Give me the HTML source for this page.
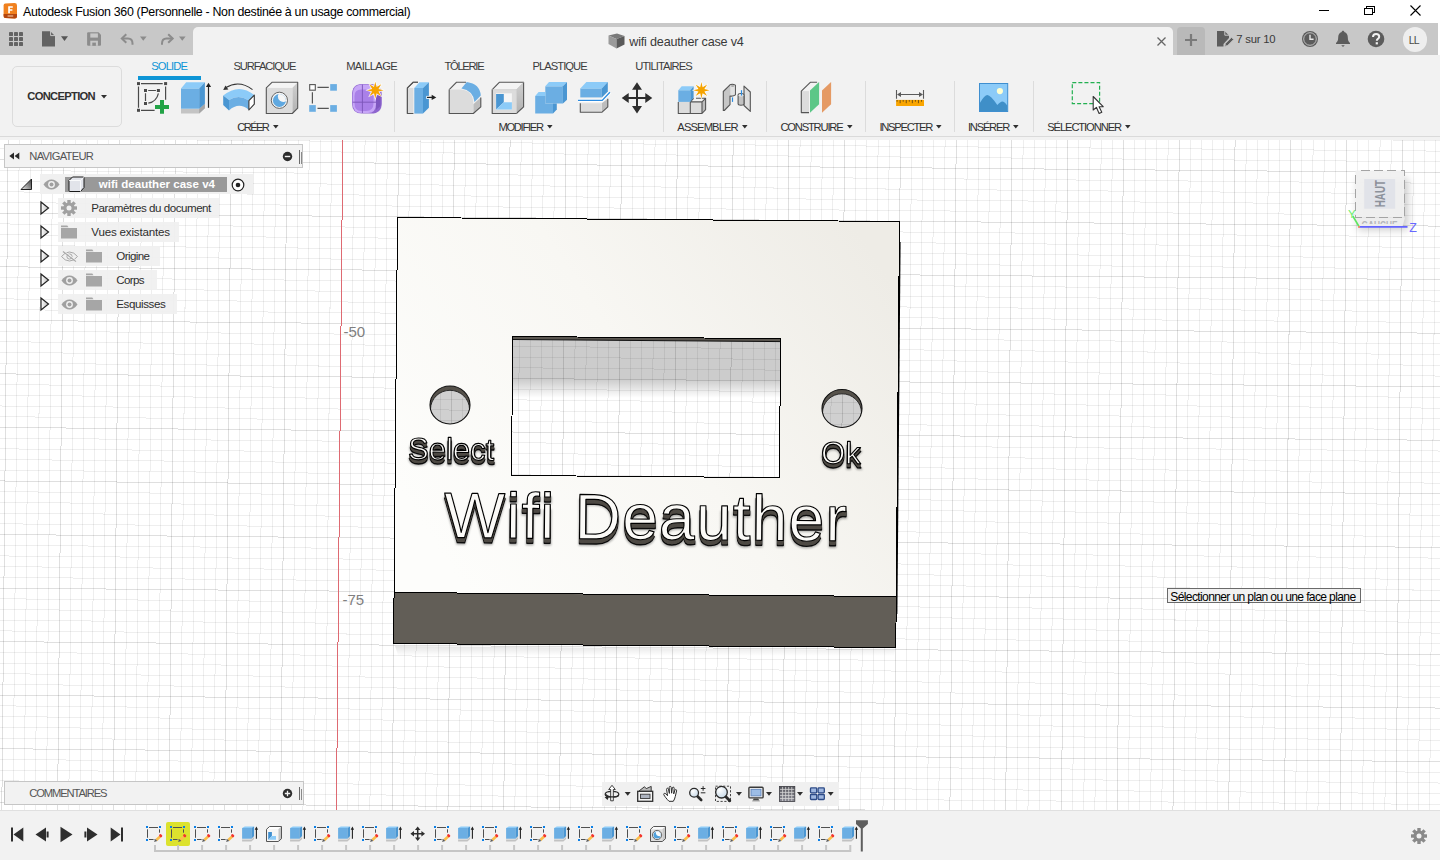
<!DOCTYPE html>
<html lang="fr"><head><meta charset="utf-8"><title>Autodesk Fusion 360</title>
<style>
html,body{margin:0;padding:0;}
body{width:1440px;height:860px;overflow:hidden;position:relative;background:#fff;font-family:"Liberation Sans",sans-serif;}
.t{position:absolute;white-space:nowrap;}
.abs{position:absolute;}
svg{position:absolute;overflow:visible;}

</style></head><body>
<svg style="left:0;top:0" width="1440" height="860" viewBox="0 0 1440 860">
<rect x="0" y="140" width="1440" height="670" fill="#fff"/>
<g shape-rendering="crispEdges" stroke-width="1"><line x1="-3.01" y1="140" x2="-9.35" y2="810" stroke="rgba(0,0,0,0.065)"/>
<line x1="8.15" y1="140" x2="1.81" y2="810" stroke="rgba(0,0,0,0.125)"/>
<line x1="19.30" y1="140" x2="12.96" y2="810" stroke="rgba(0,0,0,0.065)"/>
<line x1="30.45" y1="140" x2="24.12" y2="810" stroke="rgba(0,0,0,0.065)"/>
<line x1="41.61" y1="140" x2="35.27" y2="810" stroke="rgba(0,0,0,0.065)"/>
<line x1="52.76" y1="140" x2="46.42" y2="810" stroke="rgba(0,0,0,0.065)"/>
<line x1="63.92" y1="140" x2="57.58" y2="810" stroke="rgba(0,0,0,0.125)"/>
<line x1="75.07" y1="140" x2="68.73" y2="810" stroke="rgba(0,0,0,0.065)"/>
<line x1="86.22" y1="140" x2="79.89" y2="810" stroke="rgba(0,0,0,0.065)"/>
<line x1="97.38" y1="140" x2="91.04" y2="810" stroke="rgba(0,0,0,0.065)"/>
<line x1="108.53" y1="140" x2="102.19" y2="810" stroke="rgba(0,0,0,0.065)"/>
<line x1="119.69" y1="140" x2="113.35" y2="810" stroke="rgba(0,0,0,0.125)"/>
<line x1="130.84" y1="140" x2="124.50" y2="810" stroke="rgba(0,0,0,0.065)"/>
<line x1="141.99" y1="140" x2="135.66" y2="810" stroke="rgba(0,0,0,0.065)"/>
<line x1="153.15" y1="140" x2="146.81" y2="810" stroke="rgba(0,0,0,0.065)"/>
<line x1="164.30" y1="140" x2="157.96" y2="810" stroke="rgba(0,0,0,0.065)"/>
<line x1="175.46" y1="140" x2="169.12" y2="810" stroke="rgba(0,0,0,0.125)"/>
<line x1="186.61" y1="140" x2="180.27" y2="810" stroke="rgba(0,0,0,0.065)"/>
<line x1="197.76" y1="140" x2="191.43" y2="810" stroke="rgba(0,0,0,0.065)"/>
<line x1="208.92" y1="140" x2="202.58" y2="810" stroke="rgba(0,0,0,0.065)"/>
<line x1="220.07" y1="140" x2="213.73" y2="810" stroke="rgba(0,0,0,0.065)"/>
<line x1="231.23" y1="140" x2="224.89" y2="810" stroke="rgba(0,0,0,0.125)"/>
<line x1="242.38" y1="140" x2="236.04" y2="810" stroke="rgba(0,0,0,0.065)"/>
<line x1="253.53" y1="140" x2="247.20" y2="810" stroke="rgba(0,0,0,0.065)"/>
<line x1="264.69" y1="140" x2="258.35" y2="810" stroke="rgba(0,0,0,0.065)"/>
<line x1="275.84" y1="140" x2="269.50" y2="810" stroke="rgba(0,0,0,0.065)"/>
<line x1="287.00" y1="140" x2="280.66" y2="810" stroke="rgba(0,0,0,0.125)"/>
<line x1="298.15" y1="140" x2="291.81" y2="810" stroke="rgba(0,0,0,0.065)"/>
<line x1="309.30" y1="140" x2="302.97" y2="810" stroke="rgba(0,0,0,0.065)"/>
<line x1="320.46" y1="140" x2="314.12" y2="810" stroke="rgba(0,0,0,0.065)"/>
<line x1="331.61" y1="140" x2="325.27" y2="810" stroke="rgba(0,0,0,0.065)"/>
<line x1="353.92" y1="140" x2="347.58" y2="810" stroke="rgba(0,0,0,0.065)"/>
<line x1="365.07" y1="140" x2="358.74" y2="810" stroke="rgba(0,0,0,0.065)"/>
<line x1="376.23" y1="140" x2="369.89" y2="810" stroke="rgba(0,0,0,0.065)"/>
<line x1="387.38" y1="140" x2="381.04" y2="810" stroke="rgba(0,0,0,0.065)"/>
<line x1="398.54" y1="140" x2="392.20" y2="810" stroke="rgba(0,0,0,0.125)"/>
<line x1="409.69" y1="140" x2="403.35" y2="810" stroke="rgba(0,0,0,0.065)"/>
<line x1="420.84" y1="140" x2="414.51" y2="810" stroke="rgba(0,0,0,0.065)"/>
<line x1="432.00" y1="140" x2="425.66" y2="810" stroke="rgba(0,0,0,0.065)"/>
<line x1="443.15" y1="140" x2="436.81" y2="810" stroke="rgba(0,0,0,0.065)"/>
<line x1="454.31" y1="140" x2="447.97" y2="810" stroke="rgba(0,0,0,0.125)"/>
<line x1="465.46" y1="140" x2="459.12" y2="810" stroke="rgba(0,0,0,0.065)"/>
<line x1="476.61" y1="140" x2="470.28" y2="810" stroke="rgba(0,0,0,0.065)"/>
<line x1="487.77" y1="140" x2="481.43" y2="810" stroke="rgba(0,0,0,0.065)"/>
<line x1="498.92" y1="140" x2="492.58" y2="810" stroke="rgba(0,0,0,0.065)"/>
<line x1="510.08" y1="140" x2="503.74" y2="810" stroke="rgba(0,0,0,0.125)"/>
<line x1="521.23" y1="140" x2="514.89" y2="810" stroke="rgba(0,0,0,0.065)"/>
<line x1="532.38" y1="140" x2="526.05" y2="810" stroke="rgba(0,0,0,0.065)"/>
<line x1="543.54" y1="140" x2="537.20" y2="810" stroke="rgba(0,0,0,0.065)"/>
<line x1="554.69" y1="140" x2="548.35" y2="810" stroke="rgba(0,0,0,0.065)"/>
<line x1="565.85" y1="140" x2="559.51" y2="810" stroke="rgba(0,0,0,0.125)"/>
<line x1="577.00" y1="140" x2="570.66" y2="810" stroke="rgba(0,0,0,0.065)"/>
<line x1="588.15" y1="140" x2="581.82" y2="810" stroke="rgba(0,0,0,0.065)"/>
<line x1="599.31" y1="140" x2="592.97" y2="810" stroke="rgba(0,0,0,0.065)"/>
<line x1="610.46" y1="140" x2="604.12" y2="810" stroke="rgba(0,0,0,0.065)"/>
<line x1="621.62" y1="140" x2="615.28" y2="810" stroke="rgba(0,0,0,0.125)"/>
<line x1="632.77" y1="140" x2="626.43" y2="810" stroke="rgba(0,0,0,0.065)"/>
<line x1="643.92" y1="140" x2="637.59" y2="810" stroke="rgba(0,0,0,0.065)"/>
<line x1="655.08" y1="140" x2="648.74" y2="810" stroke="rgba(0,0,0,0.065)"/>
<line x1="666.23" y1="140" x2="659.89" y2="810" stroke="rgba(0,0,0,0.065)"/>
<line x1="677.39" y1="140" x2="671.05" y2="810" stroke="rgba(0,0,0,0.125)"/>
<line x1="688.54" y1="140" x2="682.20" y2="810" stroke="rgba(0,0,0,0.065)"/>
<line x1="699.69" y1="140" x2="693.36" y2="810" stroke="rgba(0,0,0,0.065)"/>
<line x1="710.85" y1="140" x2="704.51" y2="810" stroke="rgba(0,0,0,0.065)"/>
<line x1="722.00" y1="140" x2="715.66" y2="810" stroke="rgba(0,0,0,0.065)"/>
<line x1="733.16" y1="140" x2="726.82" y2="810" stroke="rgba(0,0,0,0.125)"/>
<line x1="744.31" y1="140" x2="737.97" y2="810" stroke="rgba(0,0,0,0.065)"/>
<line x1="755.46" y1="140" x2="749.13" y2="810" stroke="rgba(0,0,0,0.065)"/>
<line x1="766.62" y1="140" x2="760.28" y2="810" stroke="rgba(0,0,0,0.065)"/>
<line x1="777.77" y1="140" x2="771.43" y2="810" stroke="rgba(0,0,0,0.065)"/>
<line x1="788.93" y1="140" x2="782.59" y2="810" stroke="rgba(0,0,0,0.125)"/>
<line x1="800.08" y1="140" x2="793.74" y2="810" stroke="rgba(0,0,0,0.065)"/>
<line x1="811.23" y1="140" x2="804.90" y2="810" stroke="rgba(0,0,0,0.065)"/>
<line x1="822.39" y1="140" x2="816.05" y2="810" stroke="rgba(0,0,0,0.065)"/>
<line x1="833.54" y1="140" x2="827.20" y2="810" stroke="rgba(0,0,0,0.065)"/>
<line x1="844.70" y1="140" x2="838.36" y2="810" stroke="rgba(0,0,0,0.125)"/>
<line x1="855.85" y1="140" x2="849.51" y2="810" stroke="rgba(0,0,0,0.065)"/>
<line x1="867.00" y1="140" x2="860.67" y2="810" stroke="rgba(0,0,0,0.065)"/>
<line x1="878.16" y1="140" x2="871.82" y2="810" stroke="rgba(0,0,0,0.065)"/>
<line x1="889.31" y1="140" x2="882.97" y2="810" stroke="rgba(0,0,0,0.065)"/>
<line x1="900.47" y1="140" x2="894.13" y2="810" stroke="rgba(0,0,0,0.125)"/>
<line x1="911.62" y1="140" x2="905.28" y2="810" stroke="rgba(0,0,0,0.065)"/>
<line x1="922.77" y1="140" x2="916.44" y2="810" stroke="rgba(0,0,0,0.065)"/>
<line x1="933.93" y1="140" x2="927.59" y2="810" stroke="rgba(0,0,0,0.065)"/>
<line x1="945.08" y1="140" x2="938.74" y2="810" stroke="rgba(0,0,0,0.065)"/>
<line x1="956.24" y1="140" x2="949.90" y2="810" stroke="rgba(0,0,0,0.125)"/>
<line x1="967.39" y1="140" x2="961.05" y2="810" stroke="rgba(0,0,0,0.065)"/>
<line x1="978.54" y1="140" x2="972.21" y2="810" stroke="rgba(0,0,0,0.065)"/>
<line x1="989.70" y1="140" x2="983.36" y2="810" stroke="rgba(0,0,0,0.065)"/>
<line x1="1000.85" y1="140" x2="994.51" y2="810" stroke="rgba(0,0,0,0.065)"/>
<line x1="1012.01" y1="140" x2="1005.67" y2="810" stroke="rgba(0,0,0,0.125)"/>
<line x1="1023.16" y1="140" x2="1016.82" y2="810" stroke="rgba(0,0,0,0.065)"/>
<line x1="1034.31" y1="140" x2="1027.98" y2="810" stroke="rgba(0,0,0,0.065)"/>
<line x1="1045.47" y1="140" x2="1039.13" y2="810" stroke="rgba(0,0,0,0.065)"/>
<line x1="1056.62" y1="140" x2="1050.28" y2="810" stroke="rgba(0,0,0,0.065)"/>
<line x1="1067.78" y1="140" x2="1061.44" y2="810" stroke="rgba(0,0,0,0.125)"/>
<line x1="1078.93" y1="140" x2="1072.59" y2="810" stroke="rgba(0,0,0,0.065)"/>
<line x1="1090.08" y1="140" x2="1083.75" y2="810" stroke="rgba(0,0,0,0.065)"/>
<line x1="1101.24" y1="140" x2="1094.90" y2="810" stroke="rgba(0,0,0,0.065)"/>
<line x1="1112.39" y1="140" x2="1106.05" y2="810" stroke="rgba(0,0,0,0.065)"/>
<line x1="1123.55" y1="140" x2="1117.21" y2="810" stroke="rgba(0,0,0,0.125)"/>
<line x1="1134.70" y1="140" x2="1128.36" y2="810" stroke="rgba(0,0,0,0.065)"/>
<line x1="1145.85" y1="140" x2="1139.52" y2="810" stroke="rgba(0,0,0,0.065)"/>
<line x1="1157.01" y1="140" x2="1150.67" y2="810" stroke="rgba(0,0,0,0.065)"/>
<line x1="1168.16" y1="140" x2="1161.82" y2="810" stroke="rgba(0,0,0,0.065)"/>
<line x1="1179.32" y1="140" x2="1172.98" y2="810" stroke="rgba(0,0,0,0.125)"/>
<line x1="1190.47" y1="140" x2="1184.13" y2="810" stroke="rgba(0,0,0,0.065)"/>
<line x1="1201.62" y1="140" x2="1195.29" y2="810" stroke="rgba(0,0,0,0.065)"/>
<line x1="1212.78" y1="140" x2="1206.44" y2="810" stroke="rgba(0,0,0,0.065)"/>
<line x1="1223.93" y1="140" x2="1217.59" y2="810" stroke="rgba(0,0,0,0.065)"/>
<line x1="1235.09" y1="140" x2="1228.75" y2="810" stroke="rgba(0,0,0,0.125)"/>
<line x1="1246.24" y1="140" x2="1239.90" y2="810" stroke="rgba(0,0,0,0.065)"/>
<line x1="1257.39" y1="140" x2="1251.06" y2="810" stroke="rgba(0,0,0,0.065)"/>
<line x1="1268.55" y1="140" x2="1262.21" y2="810" stroke="rgba(0,0,0,0.065)"/>
<line x1="1279.70" y1="140" x2="1273.36" y2="810" stroke="rgba(0,0,0,0.065)"/>
<line x1="1290.86" y1="140" x2="1284.52" y2="810" stroke="rgba(0,0,0,0.125)"/>
<line x1="1302.01" y1="140" x2="1295.67" y2="810" stroke="rgba(0,0,0,0.065)"/>
<line x1="1313.16" y1="140" x2="1306.83" y2="810" stroke="rgba(0,0,0,0.065)"/>
<line x1="1324.32" y1="140" x2="1317.98" y2="810" stroke="rgba(0,0,0,0.065)"/>
<line x1="1335.47" y1="140" x2="1329.13" y2="810" stroke="rgba(0,0,0,0.065)"/>
<line x1="1346.63" y1="140" x2="1340.29" y2="810" stroke="rgba(0,0,0,0.125)"/>
<line x1="1357.78" y1="140" x2="1351.44" y2="810" stroke="rgba(0,0,0,0.065)"/>
<line x1="1368.93" y1="140" x2="1362.60" y2="810" stroke="rgba(0,0,0,0.065)"/>
<line x1="1380.09" y1="140" x2="1373.75" y2="810" stroke="rgba(0,0,0,0.065)"/>
<line x1="1391.24" y1="140" x2="1384.90" y2="810" stroke="rgba(0,0,0,0.065)"/>
<line x1="1402.40" y1="140" x2="1396.06" y2="810" stroke="rgba(0,0,0,0.125)"/>
<line x1="1413.55" y1="140" x2="1407.21" y2="810" stroke="rgba(0,0,0,0.065)"/>
<line x1="1424.70" y1="140" x2="1418.37" y2="810" stroke="rgba(0,0,0,0.065)"/>
<line x1="1435.86" y1="140" x2="1429.52" y2="810" stroke="rgba(0,0,0,0.065)"/>
<line x1="1447.01" y1="140" x2="1440.67" y2="810" stroke="rgba(0,0,0,0.065)"/>
<line x1="0" y1="127.53" x2="1440" y2="140.43" stroke="rgba(0,0,0,0.065)"/>
<line x1="0" y1="138.24" x2="1440" y2="151.14" stroke="rgba(0,0,0,0.065)"/>
<line x1="0" y1="148.95" x2="1440" y2="161.85" stroke="rgba(0,0,0,0.065)"/>
<line x1="0" y1="159.66" x2="1440" y2="172.56" stroke="rgba(0,0,0,0.125)"/>
<line x1="0" y1="170.37" x2="1440" y2="183.27" stroke="rgba(0,0,0,0.065)"/>
<line x1="0" y1="181.08" x2="1440" y2="193.98" stroke="rgba(0,0,0,0.065)"/>
<line x1="0" y1="191.79" x2="1440" y2="204.69" stroke="rgba(0,0,0,0.065)"/>
<line x1="0" y1="202.50" x2="1440" y2="215.40" stroke="rgba(0,0,0,0.065)"/>
<line x1="0" y1="213.21" x2="1440" y2="226.11" stroke="rgba(0,0,0,0.125)"/>
<line x1="0" y1="223.92" x2="1440" y2="236.82" stroke="rgba(0,0,0,0.065)"/>
<line x1="0" y1="234.63" x2="1440" y2="247.53" stroke="rgba(0,0,0,0.065)"/>
<line x1="0" y1="245.34" x2="1440" y2="258.24" stroke="rgba(0,0,0,0.065)"/>
<line x1="0" y1="256.05" x2="1440" y2="268.95" stroke="rgba(0,0,0,0.065)"/>
<line x1="0" y1="266.76" x2="1440" y2="279.66" stroke="rgba(0,0,0,0.125)"/>
<line x1="0" y1="277.47" x2="1440" y2="290.37" stroke="rgba(0,0,0,0.065)"/>
<line x1="0" y1="288.18" x2="1440" y2="301.08" stroke="rgba(0,0,0,0.065)"/>
<line x1="0" y1="298.89" x2="1440" y2="311.79" stroke="rgba(0,0,0,0.065)"/>
<line x1="0" y1="309.60" x2="1440" y2="322.50" stroke="rgba(0,0,0,0.065)"/>
<line x1="0" y1="320.31" x2="1440" y2="333.21" stroke="rgba(0,0,0,0.125)"/>
<line x1="0" y1="331.02" x2="1440" y2="343.92" stroke="rgba(0,0,0,0.065)"/>
<line x1="0" y1="341.73" x2="1440" y2="354.63" stroke="rgba(0,0,0,0.065)"/>
<line x1="0" y1="352.44" x2="1440" y2="365.34" stroke="rgba(0,0,0,0.065)"/>
<line x1="0" y1="363.15" x2="1440" y2="376.05" stroke="rgba(0,0,0,0.065)"/>
<line x1="0" y1="373.86" x2="1440" y2="386.76" stroke="rgba(0,0,0,0.125)"/>
<line x1="0" y1="384.57" x2="1440" y2="397.47" stroke="rgba(0,0,0,0.065)"/>
<line x1="0" y1="395.28" x2="1440" y2="408.18" stroke="rgba(0,0,0,0.065)"/>
<line x1="0" y1="405.99" x2="1440" y2="418.89" stroke="rgba(0,0,0,0.065)"/>
<line x1="0" y1="416.70" x2="1440" y2="429.60" stroke="rgba(0,0,0,0.065)"/>
<line x1="0" y1="427.41" x2="1440" y2="440.31" stroke="rgba(0,0,0,0.125)"/>
<line x1="0" y1="438.12" x2="1440" y2="451.02" stroke="rgba(0,0,0,0.065)"/>
<line x1="0" y1="448.83" x2="1440" y2="461.73" stroke="rgba(0,0,0,0.065)"/>
<line x1="0" y1="459.54" x2="1440" y2="472.44" stroke="rgba(0,0,0,0.065)"/>
<line x1="0" y1="470.25" x2="1440" y2="483.15" stroke="rgba(0,0,0,0.065)"/>
<line x1="0" y1="480.96" x2="1440" y2="493.86" stroke="rgba(0,0,0,0.125)"/>
<line x1="0" y1="491.67" x2="1440" y2="504.57" stroke="rgba(0,0,0,0.065)"/>
<line x1="0" y1="502.38" x2="1440" y2="515.28" stroke="rgba(0,0,0,0.065)"/>
<line x1="0" y1="513.09" x2="1440" y2="525.99" stroke="rgba(0,0,0,0.065)"/>
<line x1="0" y1="523.80" x2="1440" y2="536.70" stroke="rgba(0,0,0,0.065)"/>
<line x1="0" y1="534.51" x2="1440" y2="547.41" stroke="rgba(0,0,0,0.125)"/>
<line x1="0" y1="545.22" x2="1440" y2="558.12" stroke="rgba(0,0,0,0.065)"/>
<line x1="0" y1="555.93" x2="1440" y2="568.83" stroke="rgba(0,0,0,0.065)"/>
<line x1="0" y1="566.64" x2="1440" y2="579.54" stroke="rgba(0,0,0,0.065)"/>
<line x1="0" y1="577.35" x2="1440" y2="590.25" stroke="rgba(0,0,0,0.065)"/>
<line x1="0" y1="588.06" x2="1440" y2="600.96" stroke="rgba(0,0,0,0.125)"/>
<line x1="0" y1="598.77" x2="1440" y2="611.67" stroke="rgba(0,0,0,0.065)"/>
<line x1="0" y1="609.48" x2="1440" y2="622.38" stroke="rgba(0,0,0,0.065)"/>
<line x1="0" y1="620.19" x2="1440" y2="633.09" stroke="rgba(0,0,0,0.065)"/>
<line x1="0" y1="630.90" x2="1440" y2="643.80" stroke="rgba(0,0,0,0.065)"/>
<line x1="0" y1="641.61" x2="1440" y2="654.51" stroke="rgba(0,0,0,0.125)"/>
<line x1="0" y1="652.32" x2="1440" y2="665.22" stroke="rgba(0,0,0,0.065)"/>
<line x1="0" y1="663.03" x2="1440" y2="675.93" stroke="rgba(0,0,0,0.065)"/>
<line x1="0" y1="673.74" x2="1440" y2="686.64" stroke="rgba(0,0,0,0.065)"/>
<line x1="0" y1="684.45" x2="1440" y2="697.35" stroke="rgba(0,0,0,0.065)"/>
<line x1="0" y1="695.16" x2="1440" y2="708.06" stroke="rgba(0,0,0,0.125)"/>
<line x1="0" y1="705.87" x2="1440" y2="718.77" stroke="rgba(0,0,0,0.065)"/>
<line x1="0" y1="716.58" x2="1440" y2="729.48" stroke="rgba(0,0,0,0.065)"/>
<line x1="0" y1="727.29" x2="1440" y2="740.19" stroke="rgba(0,0,0,0.065)"/>
<line x1="0" y1="738.00" x2="1440" y2="750.90" stroke="rgba(0,0,0,0.065)"/>
<line x1="0" y1="748.71" x2="1440" y2="761.61" stroke="rgba(0,0,0,0.125)"/>
<line x1="0" y1="759.42" x2="1440" y2="772.32" stroke="rgba(0,0,0,0.065)"/>
<line x1="0" y1="770.13" x2="1440" y2="783.03" stroke="rgba(0,0,0,0.065)"/>
<line x1="0" y1="780.84" x2="1440" y2="793.74" stroke="rgba(0,0,0,0.065)"/>
<line x1="0" y1="791.55" x2="1440" y2="804.45" stroke="rgba(0,0,0,0.065)"/>
<line x1="0" y1="802.26" x2="1440" y2="815.16" stroke="rgba(0,0,0,0.125)"/>
<line x1="342.77" y1="140" x2="336.43" y2="810" stroke="#de6a72"/></g>
<text x="343.500" y="337" font-size="15" fill="#808080" font-family="Liberation Sans, sans-serif">-50</text>
<text x="342.500" y="605" font-size="15" fill="#808080" font-family="Liberation Sans, sans-serif">-75</text>

<defs>
<linearGradient id="topg" x1="0" y1="0.7" x2="1" y2="0.2"><stop offset="0" stop-color="#fdfdfb"/><stop offset="0.5" stop-color="#f8f7f3"/><stop offset="1" stop-color="#eeece6"/></linearGradient>
<linearGradient id="cutg" gradientUnits="userSpaceOnUse" x1="0" y1="340" x2="0" y2="398"><stop offset="0" stop-color="#000" stop-opacity="0.2"/><stop offset="0.68" stop-color="#000" stop-opacity="0.2"/><stop offset="1" stop-color="#000" stop-opacity="0"/></linearGradient>
<linearGradient id="shg" gradientUnits="userSpaceOnUse" x1="0" y1="646" x2="0" y2="656"><stop offset="0" stop-color="#000" stop-opacity="0.1"/><stop offset="1" stop-color="#000" stop-opacity="0"/></linearGradient>
<filter id="blur2" x="-20%" y="-20%" width="140%" height="140%"><feGaussianBlur stdDeviation="2"/></filter>
<filter id="blur1" x="-20%" y="-20%" width="140%" height="140%"><feGaussianBlur stdDeviation="1.2"/></filter>
</defs>
<!-- ground shadow -->
<polygon points="395.00,646.00 895.00,650.00 893.00,662.00 399.00,658.00" fill="url(#shg)"/>
<!-- right side sliver -->
<polygon points="898.50,242.00 900.60,242.00 897.40,614.00 895.30,614.00" fill="#000"/>
<!-- top face with holes (evenodd) -->
<path fill-rule="evenodd" fill="url(#topg)" d="M397.5 217.5 L899.5 221.5 L896.2 596.5 L394.0 592.5 Z M512.7 336.5 L780.6 338.6 L779.4 477.6 L511.5 475.5 Z M430 405 a20 19 0 1 0 40 0 a20 19 0 1 0 -40 0 Z M822 408.5 a20 19 0 1 0 40 0 a20 19 0 1 0 -40 0 Z"/>
<!-- front face -->
<polygon points="394.00,592.50 896.20,596.50 895.80,647.50 393.60,643.50" fill="#625e57"/>
<!-- cutout shadow + wall -->
<polygon points="512.70,336.50 780.60,338.60 780.30,398.00 512.20,398.00" fill="url(#cutg)"/>
<polygon points="512.70,336.50 780.60,338.60 780.60,341.60 512.70,339.50" fill="#5a5650"/>
<polyline points="512.70,339.50 780.60,341.60" fill="none" stroke="#111" stroke-width="1"/>
<!-- holes -->
<g>
<clipPath id="h1"><ellipse cx="450" cy="405" rx="20" ry="19"/></clipPath>
<clipPath id="h2"><ellipse cx="842" cy="408.5" rx="20" ry="19"/></clipPath>
<g clip-path="url(#h1)"><path fill-rule="evenodd" fill="#55514a" d="M429 405 a21 20 0 1 0 42 0 a21 20 0 1 0 -42 0 Z M430.5 409.3 a19.5 19 0 1 0 39.0 0 a19.5 19 0 1 0 -39.0 0 Z"/><ellipse cx="450" cy="409.300" rx="19.500" ry="19" fill="#000" fill-opacity="0.185" stroke="#1c1c1c" stroke-width="0.900"/></g>
<g clip-path="url(#h2)"><path fill-rule="evenodd" fill="#55514a" d="M821 408.5 a21 20 0 1 0 42 0 a21 20 0 1 0 -42 0 Z M822.5 412.8 a19.5 19 0 1 0 39.0 0 a19.5 19 0 1 0 -39.0 0 Z"/><ellipse cx="842" cy="412.800" rx="19.500" ry="19" fill="#000" fill-opacity="0.185" stroke="#1c1c1c" stroke-width="0.900"/></g>
<ellipse cx="450" cy="405" rx="20" ry="19" fill="none" stroke="#111" stroke-width="1.100"/>
<ellipse cx="842" cy="408.500" rx="20" ry="19" fill="none" stroke="#111" stroke-width="1.100"/>
</g>
<!-- outlines -->
<g fill="none" stroke="#000" stroke-width="1" shape-rendering="crispEdges">
<polygon points="397.50,217.50 899.50,221.50 895.80,647.50 393.60,643.50"/>
<line x1="394.0" y1="592.5" x2="896.2" y2="596.5"/>
<polygon points="512.70,336.50 780.60,338.60 779.40,477.60 511.50,475.50"/>
</g>
<g opacity="0.999" transform="translate(408,459.5) rotate(0.5) scale(1,1)">
<text x="0" y="5" font-family="Liberation Sans, sans-serif" font-size="31" letter-spacing="0" fill="#000" opacity="0.35" filter="url(#blur1)" stroke="#000" stroke-width="2">Select</text>
<text x="0" y="4" font-family="Liberation Sans, sans-serif" font-size="31" letter-spacing="0" fill="#4f4b45" stroke="#0c0c0c" stroke-width="1.500" stroke-linejoin="round">Select</text>
<text x="0" y="3" font-family="Liberation Sans, sans-serif" font-size="31" letter-spacing="0" fill="#4f4b45" stroke="#4f4b45" stroke-width="0.300" stroke-linejoin="round">Select</text>
<text x="0" y="2" font-family="Liberation Sans, sans-serif" font-size="31" letter-spacing="0" fill="#4f4b45" stroke="#4f4b45" stroke-width="0.300" stroke-linejoin="round">Select</text>
<text x="0" y="1" font-family="Liberation Sans, sans-serif" font-size="31" letter-spacing="0" fill="#4f4b45" stroke="#4f4b45" stroke-width="0.300" stroke-linejoin="round">Select</text>
<text x="0" y="0" font-family="Liberation Sans, sans-serif" font-size="31" letter-spacing="0" fill="#fbfaf7" stroke="#000" stroke-width="1.150" stroke-linejoin="round">Select</text>
</g><g opacity="0.999" transform="translate(821,463.5) rotate(0.5) scale(1,1)">
<text x="0" y="5" font-family="Liberation Sans, sans-serif" font-size="31" letter-spacing="0.2" fill="#000" opacity="0.35" filter="url(#blur1)" stroke="#000" stroke-width="2">Ok</text>
<text x="0" y="4" font-family="Liberation Sans, sans-serif" font-size="31" letter-spacing="0.2" fill="#4f4b45" stroke="#0c0c0c" stroke-width="1.500" stroke-linejoin="round">Ok</text>
<text x="0" y="3" font-family="Liberation Sans, sans-serif" font-size="31" letter-spacing="0.2" fill="#4f4b45" stroke="#4f4b45" stroke-width="0.300" stroke-linejoin="round">Ok</text>
<text x="0" y="2" font-family="Liberation Sans, sans-serif" font-size="31" letter-spacing="0.2" fill="#4f4b45" stroke="#4f4b45" stroke-width="0.300" stroke-linejoin="round">Ok</text>
<text x="0" y="1" font-family="Liberation Sans, sans-serif" font-size="31" letter-spacing="0.2" fill="#4f4b45" stroke="#4f4b45" stroke-width="0.300" stroke-linejoin="round">Ok</text>
<text x="0" y="0" font-family="Liberation Sans, sans-serif" font-size="31" letter-spacing="0.2" fill="#fbfaf7" stroke="#000" stroke-width="1.150" stroke-linejoin="round">Ok</text>
</g><g opacity="0.999" transform="translate(444,537.5) rotate(0.5) scale(1,1)">
<text x="0" y="6" font-family="Liberation Sans, sans-serif" font-size="64.5" letter-spacing="1.0" fill="#000" opacity="0.35" filter="url(#blur1)" stroke="#000" stroke-width="2">Wifi Deauther</text>
<text x="0" y="5" font-family="Liberation Sans, sans-serif" font-size="64.5" letter-spacing="1.0" fill="#4f4b45" stroke="#0c0c0c" stroke-width="1.500" stroke-linejoin="round">Wifi Deauther</text>
<text x="0" y="4" font-family="Liberation Sans, sans-serif" font-size="64.5" letter-spacing="1.0" fill="#4f4b45" stroke="#4f4b45" stroke-width="0.300" stroke-linejoin="round">Wifi Deauther</text>
<text x="0" y="3" font-family="Liberation Sans, sans-serif" font-size="64.5" letter-spacing="1.0" fill="#4f4b45" stroke="#4f4b45" stroke-width="0.300" stroke-linejoin="round">Wifi Deauther</text>
<text x="0" y="2" font-family="Liberation Sans, sans-serif" font-size="64.5" letter-spacing="1.0" fill="#4f4b45" stroke="#4f4b45" stroke-width="0.300" stroke-linejoin="round">Wifi Deauther</text>
<text x="0" y="1" font-family="Liberation Sans, sans-serif" font-size="64.5" letter-spacing="1.0" fill="#4f4b45" stroke="#4f4b45" stroke-width="0.300" stroke-linejoin="round">Wifi Deauther</text>
<text x="0" y="0" font-family="Liberation Sans, sans-serif" font-size="64.5" letter-spacing="1.0" fill="#fbfaf7" stroke="#000" stroke-width="1.150" stroke-linejoin="round">Wifi Deauther</text>
</g>
</svg>
<div class="abs" style="left:4px;top:144px;width:299px;height:23.500px;background:#f2f2f2;border:1px solid #c6c6c6;box-sizing:border-box"></div>
<svg style="left:9px;top:152px" width="12" height="8" viewBox="0 0 12 8"><path d="M5 0.500v7L0.300 4zM10.300 0.500v7L5.600 4z" fill="#2a2a2a"/></svg>
<div class="t " style="left:29.30px;top:150.18px;font-size:11.2px;line-height:13.44px;color:#555;letter-spacing:-0.719px;">NAVIGATEUR</div>
<svg style="left:282px;top:151px" width="11" height="11" viewBox="0 0 11 11"><circle cx="5.500" cy="5.500" r="4.700" fill="#2c2c2c"/><rect x="2.800" y="4.800" width="5.400" height="1.400" fill="#f2f2f2"/></svg>
<div class="abs" style="left:299px;top:150px;width:1.200px;height:14px;background:#6a6a6a"></div><div class="abs" style="left:301.200px;top:152px;width:1px;height:12px;background:#8a8a8a"></div>
<div class="abs" style="left:40px;top:174px;width:212.500px;height:19.500px;background:#f0f0f0"></div>
<svg style="left:20px;top:178px" width="13" height="13" viewBox="0 0 13 13"><defs><linearGradient id="trg" x1="0" y1="1" x2="1" y2="0.300"><stop offset="0" stop-color="#eee"/><stop offset="1" stop-color="#555"/></linearGradient></defs><path d="M11.500 1v10.500H1z" fill="url(#trg)" stroke="#222" stroke-width="1"/></svg>
<svg style="left:43px;top:178.500px" width="17" height="11" viewBox="0 0 17 11"><g><path d="M0.500 5.500Q4 0.500 8.500 0.500T16.500 5.500Q13 10.500 8.500 10.500T0.500 5.500Z" fill="#a0a0a0"/><circle cx="8.500" cy="5.500" r="3.400" fill="#f0f0f0"/><circle cx="8.500" cy="5.500" r="2" fill="#a0a0a0"/></g></svg>
<div class="abs" style="left:65px;top:176.500px;width:162px;height:15.500px;background:#999"></div>
<svg style="left:67.500px;top:176px" width="17" height="17" viewBox="0 0 17 17"><path d="M1 4.500L4.500 1h10.500q1 0 1 1v9.500L12.500 15.500H2q-1 0-1-1z" fill="#e2e4ea" stroke="#1a1a1a" stroke-width="1" stroke-linejoin="round"/><path d="M1 4.500h11.500v11M12.500 4.500L16 1.300" fill="none" stroke="#fff" stroke-width="0.800"/></svg>
<div class="t " style="left:98.80px;top:178.30px;font-size:11.5px;line-height:13.80px;color:#fff;letter-spacing:0.025px;font-weight:bold;">wifi deauther case v4</div>
<svg style="left:230.500px;top:177.500px" width="14" height="14" viewBox="0 0 14 14"><circle cx="7" cy="7" r="5.800" fill="#fff" stroke="#222" stroke-width="1.200"/><circle cx="7" cy="7" r="2.300" fill="#222"/></svg>
<div class="abs" style="left:58.300px;top:198.2px;width:161.2px;height:19.500px;background:rgba(240,240,240,0.940)"></div>
<svg style="left:39.5px;top:201px" width="10" height="14" viewBox="0 0 10 14"><defs><linearGradient id="tg39.5201" x1="0" y1="0" x2="1" y2="0"><stop offset="0" stop-color="#fff"/><stop offset="1" stop-color="#bbb"/></linearGradient></defs><path d="M1 1l7.500 6-7.500 6z" fill="url(#tg39.5201)" stroke="#222" stroke-width="1.200" stroke-linejoin="miter"/></svg>
<svg style="left:61px;top:200px" width="16" height="16" viewBox="0 0 16 16"><g transform="translate(8,8)" fill="#a0a0a0"><circle r="5.600"/><g><rect x="-1.700" y="-8" width="3.400" height="4" transform="rotate(0)"/><rect x="-1.700" y="-8" width="3.400" height="4" transform="rotate(45)"/><rect x="-1.700" y="-8" width="3.400" height="4" transform="rotate(90)"/><rect x="-1.700" y="-8" width="3.400" height="4" transform="rotate(135)"/><rect x="-1.700" y="-8" width="3.400" height="4" transform="rotate(180)"/><rect x="-1.700" y="-8" width="3.400" height="4" transform="rotate(225)"/><rect x="-1.700" y="-8" width="3.400" height="4" transform="rotate(270)"/><rect x="-1.700" y="-8" width="3.400" height="4" transform="rotate(315)"/></g><circle r="2.500" fill="#f0f0f0"/></g></svg>
<div class="t " style="left:91.30px;top:201.24px;font-size:11.6px;line-height:13.92px;color:#2e2e2e;letter-spacing:-0.485px;">Paramètres du document</div>
<div class="abs" style="left:58.300px;top:222.2px;width:121.2px;height:19.500px;background:rgba(240,240,240,0.940)"></div>
<svg style="left:39.5px;top:225px" width="10" height="14" viewBox="0 0 10 14"><defs><linearGradient id="tg39.5225" x1="0" y1="0" x2="1" y2="0"><stop offset="0" stop-color="#fff"/><stop offset="1" stop-color="#bbb"/></linearGradient></defs><path d="M1 1l7.500 6-7.500 6z" fill="url(#tg39.5225)" stroke="#222" stroke-width="1.200" stroke-linejoin="miter"/></svg>
<svg style="left:61px;top:224.5px" width="16" height="14" viewBox="0 0 16 14"><path d="M0 0.500h6.300l1.200 1.800H0z" fill="#a6a6a6"/><rect x="0" y="3" width="16" height="10.500" fill="#a6a6a6"/></svg>
<div class="t " style="left:91.30px;top:225.24px;font-size:11.6px;line-height:13.92px;color:#2e2e2e;letter-spacing:-0.194px;">Vues existantes</div>
<div class="abs" style="left:58.300px;top:246.2px;width:102.2px;height:19.500px;background:rgba(240,240,240,0.940)"></div>
<svg style="left:39.5px;top:249px" width="10" height="14" viewBox="0 0 10 14"><defs><linearGradient id="tg39.5249" x1="0" y1="0" x2="1" y2="0"><stop offset="0" stop-color="#fff"/><stop offset="1" stop-color="#bbb"/></linearGradient></defs><path d="M1 1l7.500 6-7.500 6z" fill="url(#tg39.5249)" stroke="#222" stroke-width="1.200" stroke-linejoin="miter"/></svg>
<svg style="left:60.500px;top:250.5px" width="17" height="11" viewBox="0 0 17 11"><g fill="none" stroke="#a8a8a8" stroke-width="1"><path d="M0.500 5.500Q4 1 8.500 1T16.500 5.500Q13 10 8.500 10T0.500 5.500Z"/><circle cx="8.500" cy="5.500" r="2.600"/><path d="M2 0.500L15 10.500" stroke-width="1.200"/><path d="M3.500 0.300L16 10" stroke="#f0f0f0" stroke-width="0.800"/></g></svg>
<svg style="left:86px;top:248.5px" width="16" height="14" viewBox="0 0 16 14"><path d="M0 0.500h6.300l1.200 1.800H0z" fill="#a6a6a6"/><rect x="0" y="3" width="16" height="10.500" fill="#a6a6a6"/></svg>
<div class="t " style="left:116.30px;top:249.24px;font-size:11.6px;line-height:13.92px;color:#2e2e2e;letter-spacing:-0.612px;">Origine</div>
<div class="abs" style="left:58.300px;top:270.2px;width:98.5px;height:19.500px;background:rgba(240,240,240,0.940)"></div>
<svg style="left:39.5px;top:273px" width="10" height="14" viewBox="0 0 10 14"><defs><linearGradient id="tg39.5273" x1="0" y1="0" x2="1" y2="0"><stop offset="0" stop-color="#fff"/><stop offset="1" stop-color="#bbb"/></linearGradient></defs><path d="M1 1l7.500 6-7.500 6z" fill="url(#tg39.5273)" stroke="#222" stroke-width="1.200" stroke-linejoin="miter"/></svg>
<svg style="left:60.500px;top:274.5px" width="17" height="11" viewBox="0 0 17 11"><g><path d="M0.500 5.500Q4 0.500 8.500 0.500T16.500 5.500Q13 10.500 8.500 10.500T0.500 5.500Z" fill="#a0a0a0"/><circle cx="8.500" cy="5.500" r="3.400" fill="#f0f0f0"/><circle cx="8.500" cy="5.500" r="2" fill="#a0a0a0"/></g></svg>
<svg style="left:86px;top:272.5px" width="16" height="14" viewBox="0 0 16 14"><path d="M0 0.500h6.300l1.200 1.800H0z" fill="#a6a6a6"/><rect x="0" y="3" width="16" height="10.500" fill="#a6a6a6"/></svg>
<div class="t " style="left:116.30px;top:273.24px;font-size:11.6px;line-height:13.92px;color:#2e2e2e;letter-spacing:-0.682px;">Corps</div>
<div class="abs" style="left:58.300px;top:294.2px;width:118.5px;height:19.500px;background:rgba(240,240,240,0.940)"></div>
<svg style="left:39.5px;top:297px" width="10" height="14" viewBox="0 0 10 14"><defs><linearGradient id="tg39.5297" x1="0" y1="0" x2="1" y2="0"><stop offset="0" stop-color="#fff"/><stop offset="1" stop-color="#bbb"/></linearGradient></defs><path d="M1 1l7.500 6-7.500 6z" fill="url(#tg39.5297)" stroke="#222" stroke-width="1.200" stroke-linejoin="miter"/></svg>
<svg style="left:60.500px;top:298.5px" width="17" height="11" viewBox="0 0 17 11"><g><path d="M0.500 5.500Q4 0.500 8.500 0.500T16.500 5.500Q13 10.500 8.500 10.500T0.500 5.500Z" fill="#a0a0a0"/><circle cx="8.500" cy="5.500" r="3.400" fill="#f0f0f0"/><circle cx="8.500" cy="5.500" r="2" fill="#a0a0a0"/></g></svg>
<svg style="left:86px;top:296.5px" width="16" height="14" viewBox="0 0 16 14"><path d="M0 0.500h6.300l1.200 1.800H0z" fill="#a6a6a6"/><rect x="0" y="3" width="16" height="10.500" fill="#a6a6a6"/></svg>
<div class="t " style="left:116.30px;top:297.24px;font-size:11.6px;line-height:13.92px;color:#2e2e2e;letter-spacing:-0.418px;">Esquisses</div>
<div class="abs" style="left:4px;top:781px;width:299.500px;height:24px;background:#f2f2f2;border:1px solid #c6c6c6;box-sizing:border-box"></div>
<div class="t " style="left:29.30px;top:787.38px;font-size:11.2px;line-height:13.44px;color:#555;letter-spacing:-1.115px;">COMMENTAIRES</div>
<svg style="left:282px;top:788px" width="11" height="11" viewBox="0 0 11 11"><circle cx="5.500" cy="5.500" r="4.700" fill="#2c2c2c"/><path d="M5.500 2.800v5.400M2.800 5.500h5.400" stroke="#f2f2f2" stroke-width="1.300"/></svg>
<div class="abs" style="left:299px;top:787px;width:1.200px;height:13px;background:#6a6a6a"></div><div class="abs" style="left:301.200px;top:789px;width:1px;height:11px;background:#8a8a8a"></div>
<div class="abs" style="left:1167px;top:588px;width:194px;height:15px;background:#f1f1f1;border:1px solid #6a6a6a;box-sizing:border-box"></div>
<div class="t " style="left:1170.30px;top:589.54px;font-size:12.1px;line-height:14.52px;color:#000;letter-spacing:-0.648px;">Sélectionner un plan ou une face plane</div>
<svg style="left:1330px;top:150px" width="100" height="100" viewBox="1330 150 100 100">
<defs><filter id="vcb" x="-30%" y="-30%" width="160%" height="160%"><feGaussianBlur stdDeviation="4"/></filter></defs>
<rect x="1358" y="178" width="50" height="52" fill="#000" opacity="0.200" filter="url(#vcb)"/>
<rect x="1355.500" y="170.500" width="48.500" height="47" fill="#f0f0f0" fill-opacity="0.960"/>
<path d="M1354 217.500h51l-2.500 9h-44.500z" fill="#ededed"/>
<rect x="1364.200" y="179" width="31" height="29.700" fill="#e1e3e9"/>
<g fill="none" stroke="#a4a4a4" stroke-width="1" stroke-dasharray="9 4.200" shape-rendering="crispEdges">
<path d="M1361 170.500h43v47h-48.500v-47"/></g>
<text transform="translate(1385.100,207.200) rotate(-90)" font-family="Liberation Sans, sans-serif" font-weight="bold" font-size="15.300" fill="#8d929b" textLength="27.200" lengthAdjust="spacingAndGlyphs">HAUT</text>
<clipPath id="vcf"><rect x="1358" y="220.800" width="44" height="3.200"/></clipPath>
<g clip-path="url(#vcf)"><text x="1361.500" y="229" font-family="Liberation Sans, sans-serif" font-weight="bold" font-size="10.500" fill="#b4b6ba" textLength="36" lengthAdjust="spacingAndGlyphs">GAUCHE</text></g>
<line x1="1359" y1="226.800" x2="1407.500" y2="226.800" stroke="#6262ff" stroke-width="1.700"/>
<line x1="1359" y1="226.500" x2="1352.800" y2="216" stroke="#5fe65f" stroke-width="1.600"/>
<rect x="1358" y="226" width="2" height="1.800" fill="#f08a6a"/>
<text x="1347.900" y="218.200" font-family="Liberation Sans, sans-serif" font-size="11.500" fill="#6aee6a">Y</text>
<text x="1409.200" y="232.300" font-family="Liberation Sans, sans-serif" font-size="12.500" fill="#6868ff">Z</text>
</svg>
<div class="abs" style="left:0;top:0;width:1440px;height:23px;background:#fff"></div>
<svg style="left:3px;top:3px" width="15" height="16" viewBox="0 0 15 16">
<path d="M2.2 0.6 L11.5 0 Q14 0 14 2.4 L14 13.6 Q14 15.6 11.8 15.6 L2.2 15 Q0.6 14.8 0.6 13 L0.6 2.4 Q0.6 0.8 2.2 0.6Z" fill="#f0801e"/>
<path d="M0.6 11 L14 11 L14 13.6 Q14 15.6 11.8 15.6 L2.2 15 Q0.6 14.8 0.6 13Z" fill="#b4460f"/>
<path d="M5.2 3.2h4.6v1.5H6.9v1.6h2.5v1.4H6.9v2.6H5.2z" fill="#fff"/>
<rect x="4.6" y="12.2" width="5.6" height="1.6" fill="#e9b48e" opacity=".8"/>
</svg>
<div class="t " style="left:23.00px;top:4.96px;font-size:12.4px;line-height:14.88px;color:#000;letter-spacing:-0.313px;">Autodesk Fusion 360 (Personnelle - Non destinée à un usage commercial)</div>
<svg style="left:1300px;top:0" width="140" height="23" viewBox="0 0 140 23" shape-rendering="crispEdges">
<rect x="19" y="10" width="10" height="1" fill="#000"/>
<rect x="64.5" y="8.5" width="8" height="6" fill="none" stroke="#000" stroke-width="1"/>
<path d="M66.5 8.5v-2h8v6h-2" fill="none" stroke="#000" stroke-width="1"/>
<g shape-rendering="geometricPrecision"><path d="M110.5 5.5l10 10M120.500 5.5l-10 10" stroke="#000" stroke-width="1.1" fill="none"/></g>
</svg>
<div class="abs" style="left:0;top:23px;width:1438px;height:32px;background:#c8c8c8"></div>
<div class="abs" style="left:193px;top:27px;width:980px;height:28px;background:#f2f2f2;border-radius:5px 5px 0 0"></div>
<div class="abs" style="left:1177px;top:27px;width:28px;height:28px;background:#b9b9b9;border-radius:4px 4px 0 0"></div>
<div class="abs" style="left:0;top:55px;width:1440px;height:85px;background:#f2f2f2"></div>
<div class="abs" style="left:0;top:136px;width:1440px;height:1px;background:#dadada"></div>
<svg style="left:0;top:23px" width="200" height="32" viewBox="0 23 200 32">
<g fill="#636363"><rect x="9" y="32" width="4" height="4" rx="0.400"/><rect x="14" y="32" width="4" height="4" rx="0.400"/><rect x="19" y="32" width="4" height="4" rx="0.400"/><rect x="9" y="37" width="4" height="4" rx="0.400"/><rect x="14" y="37" width="4" height="4" rx="0.400"/><rect x="19" y="37" width="4" height="4" rx="0.400"/><rect x="9" y="42" width="4" height="4" rx="0.400"/><rect x="14" y="42" width="4" height="4" rx="0.400"/><rect x="19" y="42" width="4" height="4" rx="0.400"/>
<path d="M42 31.200h8.300l4.700 4.700v10.600h-13z"/>
</g>
<path d="M61 36.300h7l-3.500 4.700z" fill="#555"/>
<path d="M50.600 31v4.600h4.600" fill="none" stroke="#c8c8c8" stroke-width="1"/>
<g fill="#8c8c8c">
<path d="M87.100 33.300q0-1 1-1h10.400l2.500 2.500v10q0 1-1 1h-11.900q-1 0-1-1z"/>
<path d="M140 36.500h6.600l-3.300 4.200z"/><path d="M179 36.500h6.600l-3.300 4.200z"/>
</g>
<rect x="90.300" y="33.400" width="7.600" height="4.200" fill="#c8c8c8"/><rect x="90.300" y="40.700" width="7.600" height="5.100" fill="#c8c8c8"/><rect x="92.300" y="42.600" width="3.600" height="3.200" fill="#8c8c8c"/>
<g fill="none" stroke="#8c8c8c" stroke-width="2">
<path d="M122 38.500h6q4.500 0 4.500 5v1.300"/><path d="M126.300 34.200l-4.500 4.300 4.500 4.300"/>
<path d="M172.500 38.500h-6q-4.500 0-4.500 5v1.300"/><path d="M168.200 34.200l4.500 4.300-4.500 4.300"/>
</g>
</svg>
<svg style="left:608px;top:33px" width="17" height="16" viewBox="0 0 17 16">
<path d="M0.500 2.500L9 0.500l7.500 2.500-8 3z" fill="#7a7a7a"/>
<path d="M0.500 2.500l8 3.500v9.500l-8-4.500z" fill="#9a9a9a"/>
<path d="M8.500 6l8-3v8.500l-8 4z" fill="#5a5a5a"/>
</svg>
<div class="t " style="left:629.30px;top:35.34px;font-size:12.6px;line-height:15.12px;color:#3a3a3a;letter-spacing:-0.190px;">wifi deauther case v4</div>
<svg style="left:1156px;top:36px" width="11" height="11" viewBox="0 0 11 11"><path d="M1.500 1.500l8 8M9.500 1.500l-8 8" stroke="#666" stroke-width="1.300" fill="none"/></svg>
<svg style="left:1184px;top:33px" width="14" height="14" viewBox="0 0 14 14"><path d="M7 1v12M1 7h12" stroke="#7a7a7a" stroke-width="2.200" fill="none"/></svg>
<svg style="left:1216px;top:30px" width="18" height="18" viewBox="0 0 18 18">
<path d="M1 1h7.500l4.500 4.500V8l-5.500 6v2.500H1z" fill="#5c5c5c"/>
<path d="M8.800 1v4.200h4.200" fill="none" stroke="#c8c8c8" stroke-width="1"/>
<path d="M8.600 16.400l0.900-3.100 6-6 2.200 2.200-6 6z" fill="#5c5c5c" stroke="#c8c8c8" stroke-width="0.900"/>
</svg>
<div class="t " style="left:1236.30px;top:33.12px;font-size:11.3px;line-height:13.56px;color:#3a3a3a;letter-spacing:-0.217px;">7 sur 10</div>
<svg style="left:1301px;top:30px" width="18" height="18" viewBox="0 0 18 18">
<circle cx="9" cy="9" r="8" fill="#5c5c5c"/><circle cx="9" cy="9" r="6.300" fill="none" stroke="#c8c8c8" stroke-width="0.900"/>
<path d="M9 4.800V9.300h3.600" fill="none" stroke="#e8e8e8" stroke-width="1.400"/></svg>
<svg style="left:1335px;top:30px" width="16" height="18" viewBox="0 0 16 18">
<path d="M8 0.800c0.900 0 1.300 0.600 1.300 1.300 2.400 0.700 3.500 2.700 3.500 5.200 0 3.400 0.900 4.600 2.200 5.700v1H1v-1c1.300-1.100 2.200-2.300 2.200-5.700 0-2.500 1.100-4.500 3.500-5.200 0-0.700 0.400-1.300 1.300-1.300z" fill="#5c5c5c"/>
<path d="M6.200 15.200h3.600L8 17z" fill="#5c5c5c"/></svg>
<svg style="left:1367px;top:30px" width="18" height="18" viewBox="0 0 18 18">
<circle cx="9" cy="9" r="8.300" fill="#5c5c5c"/>
<path d="M6 7c0-1.900 1.300-3 3.100-3s3.100 1.100 3.100 2.700c0 2.100-2.400 2.200-2.400 4.100" fill="none" stroke="#f0f0f0" stroke-width="2"/>
<rect x="8.700" y="12.200" width="2.200" height="2.200" fill="#f0f0f0"/></svg>
<div class="abs" style="left:1402.500px;top:27px;width:24.500px;height:24.500px;border-radius:50%;background:#eeeeee"></div>
<div class="t " style="left:1408.80px;top:33.90px;font-size:10.5px;line-height:12.60px;color:#4a4a4a;letter-spacing:-0.879px;">LL</div>
<div class="t " style="left:151.20px;top:60.18px;font-size:11.2px;line-height:13.44px;color:#0d95d6;letter-spacing:-0.839px;">SOLIDE</div>
<div class="t " style="left:233.50px;top:60.18px;font-size:11.2px;line-height:13.44px;color:#3c3c3c;letter-spacing:-1.092px;">SURFACIQUE</div>
<div class="t " style="left:346.20px;top:60.18px;font-size:11.2px;line-height:13.44px;color:#3c3c3c;letter-spacing:-0.634px;">MAILLAGE</div>
<div class="t " style="left:444.40px;top:60.18px;font-size:11.2px;line-height:13.44px;color:#3c3c3c;letter-spacing:-1.273px;">TÔLERIE</div>
<div class="t " style="left:532.50px;top:60.18px;font-size:11.2px;line-height:13.44px;color:#3c3c3c;letter-spacing:-0.948px;">PLASTIQUE</div>
<div class="t " style="left:635.30px;top:60.18px;font-size:11.2px;line-height:13.44px;color:#3c3c3c;letter-spacing:-0.952px;">UTILITAIRES</div>
<div class="abs" style="left:138px;top:76px;width:63px;height:3.500px;background:#0d95d6"></div>
<div class="abs" style="left:11.500px;top:65.500px;width:108px;height:59px;border:1px solid #dcdcdc;border-radius:5px;background:#f2f2f2"></div>
<div class="t " style="left:27.30px;top:90.48px;font-size:11.2px;line-height:13.44px;color:#303030;letter-spacing:-0.688px;font-weight:bold;">CONCEPTION</div>
<svg style="left:100.80px;top:94.50px" width="6" height="3.6" viewBox="0 0 6 3.6"><path d="M0 0h6l-3.0 3.6z" fill="#303030"/></svg>
<div class="t " style="left:237.30px;top:121.18px;font-size:11.2px;line-height:13.44px;color:#303030;letter-spacing:-1.629px;">CRÉER</div>
<svg style="left:273.10px;top:124.90px" width="5.6" height="3.4" viewBox="0 0 5.6 3.4"><path d="M0 0h5.6l-2.8 3.4z" fill="#303030"/></svg>
<div class="t " style="left:498.40px;top:121.18px;font-size:11.2px;line-height:13.44px;color:#303030;letter-spacing:-1.295px;">MODIFIER</div>
<svg style="left:547.20px;top:124.90px" width="5.6" height="3.4" viewBox="0 0 5.6 3.4"><path d="M0 0h5.6l-2.8 3.4z" fill="#303030"/></svg>
<div class="t " style="left:677.30px;top:121.18px;font-size:11.2px;line-height:13.44px;color:#303030;letter-spacing:-0.874px;">ASSEMBLER</div>
<svg style="left:742.20px;top:124.90px" width="5.6" height="3.4" viewBox="0 0 5.6 3.4"><path d="M0 0h5.6l-2.8 3.4z" fill="#303030"/></svg>
<div class="t " style="left:780.40px;top:121.18px;font-size:11.2px;line-height:13.44px;color:#303030;letter-spacing:-1.185px;">CONSTRUIRE</div>
<svg style="left:847.00px;top:124.90px" width="5.6" height="3.4" viewBox="0 0 5.6 3.4"><path d="M0 0h5.6l-2.8 3.4z" fill="#303030"/></svg>
<div class="t " style="left:879.40px;top:121.18px;font-size:11.2px;line-height:13.44px;color:#303030;letter-spacing:-1.265px;">INSPECTER</div>
<svg style="left:936.20px;top:124.90px" width="5.6" height="3.4" viewBox="0 0 5.6 3.4"><path d="M0 0h5.6l-2.8 3.4z" fill="#303030"/></svg>
<div class="t " style="left:968.00px;top:121.18px;font-size:11.2px;line-height:13.44px;color:#303030;letter-spacing:-1.250px;">INSÉRER</div>
<svg style="left:1013.10px;top:124.90px" width="5.6" height="3.4" viewBox="0 0 5.6 3.4"><path d="M0 0h5.6l-2.8 3.4z" fill="#303030"/></svg>
<div class="t " style="left:1047.20px;top:121.18px;font-size:11.2px;line-height:13.44px;color:#303030;letter-spacing:-1.105px;">SÉLECTIONNER</div>
<svg style="left:1125.00px;top:124.90px" width="5.6" height="3.4" viewBox="0 0 5.6 3.4"><path d="M0 0h5.6l-2.8 3.4z" fill="#303030"/></svg>
<div class="abs" style="left:393.5px;top:81px;width:1.500px;height:51px;background:#dcdcdc"></div>
<div class="abs" style="left:662.5px;top:81px;width:1.500px;height:51px;background:#dcdcdc"></div>
<div class="abs" style="left:765.5px;top:81px;width:1.500px;height:51px;background:#dcdcdc"></div>
<div class="abs" style="left:864.5px;top:81px;width:1.500px;height:51px;background:#dcdcdc"></div>
<div class="abs" style="left:953.5px;top:81px;width:1.500px;height:51px;background:#dcdcdc"></div>
<div class="abs" style="left:1032.5px;top:81px;width:1.500px;height:51px;background:#dcdcdc"></div>
<svg style="left:0;top:55px" width="1440" height="85" viewBox="0 55 1440 85"><g stroke="#4a4a4a" stroke-width="1.200" fill="none">
<path d="M141 83.600H162.700M138.500 86.600V107.800M165.600 86.600V99.700M141 110.300H154.600"/>
<path d="M148.200 90.500H155.900M145.500 93.300V101M158.400 93.300A12.900 12.900 0 0 1 148.300 103.200"/></g>
<g fill="#4a4a4a"><rect x="137" y="82.100" width="3" height="3"/><rect x="164.100" y="82.100" width="3" height="3"/><rect x="137" y="108.800" width="3" height="3"/>
<rect x="144" y="89" width="3" height="3"/><rect x="156.900" y="89" width="3" height="3"/><rect x="144" y="102" width="3" height="3"/></g>
<path d="M160 100.100h4v4.800h5v4.100h-5v4.800h-4v-4.800h-5v-4.100h5z" fill="#22a346"/><path d="M181 108.700H199.200L204.900 103.700V108.200L199.200 113.600H181z" fill="#c4c4c4"/><path d="M199.200 108.700L204.900 103.700V108.200L199.200 113.600z" fill="#a6a6a6"/>
<rect x="181" y="88.400" width="18.200" height="20.300" fill="#6baee3"/><path d="M181 88.400L186.200 82.300H204.900L199.200 88.400z" fill="#8ccbf8"/><path d="M199.200 88.400L204.900 82.300V103.700L199.200 108.700z" fill="#4a96d2"/>
<path d="M208.500 86V107.800" stroke="#222" stroke-width="1.200"/><path d="M208.500 82.800l2.600 4.200h-5.200z" fill="#222"/><path d="M252.500 89.600Q239 79.500 225.500 87.800" fill="none" stroke="#333" stroke-width="1.100"/><path d="M223.200 90l2.200-4.600 3 4z" fill="#333"/>
<path d="M223.200 95.600Q239 82.500 254.300 95.100L248.900 100.600Q239 93.500 229 100.100z" fill="#8ccbf8"/>
<path d="M229 100.100Q239 93.500 248.900 100.600V110Q239 101.500 229 110.500z" fill="#6baee3"/>
<path d="M223.200 95.600L229 100.100V110.500L223.200 105z" fill="#4a96d2"/>
<path d="M248.900 100.600L254.300 95.100V104.200L248.900 110z" fill="#fff" stroke="#333" stroke-width="1.100" stroke-linejoin="round"/><defs><linearGradient id="gR" x1="0" y1="0" x2="0" y2="1"><stop offset="0" stop-color="#cfcfcf"/><stop offset="1" stop-color="#b2b2b2"/></linearGradient></defs>
<path d="M266.300 87.900L272.200 82.200H297.700L292.300 87.900z" fill="#f4f4f4"/><path d="M292.300 87.900L297.700 82.200V108.200L292.300 113.500z" fill="url(#gR)"/><rect x="266.300" y="87.900" width="26" height="25.600" fill="#dcdcdc"/>
<path d="M266.300 87.900L272.200 82.200H297.700V108.200L292.300 113.500H266.300z" fill="none" stroke="#555" stroke-width="1.100" stroke-linejoin="round"/>
<circle cx="279.400" cy="100.300" r="8.100" fill="#f6f6f6" stroke="#555" stroke-width="0.900"/>
<clipPath id="hc"><circle cx="279.400" cy="100.500" r="6.500"/></clipPath><g clip-path="url(#hc)"><rect x="270" y="92" width="20" height="18" fill="#5fa8e0"/><circle cx="283.300" cy="96.500" r="5.400" fill="#f6f6f6"/></g><path d="M317.500 87.400H328.800M312.400 92.200V103.500M317.500 108.400H328.800" stroke="#555" stroke-width="1.200" fill="none"/>
<rect x="309.700" y="84.600" width="5.600" height="5.600" fill="#fff" stroke="#555" stroke-width="1.100"/>
<rect x="330.200" y="84.100" width="6.700" height="6.600" fill="#6baee3"/><rect x="309.200" y="105.100" width="6.600" height="6.700" fill="#6baee3"/><rect x="330.200" y="105.100" width="6.700" height="6.700" fill="#6baee3"/><path d="M352 95Q352 84.100 362 84.100H370Q381.800 84.100 381.800 95V103Q381.800 113.600 371 113.600H362Q352 113.600 352 103z" fill="#8f66cf"/>
<path d="M352.600 95Q352.600 84.600 362 84.600H369Q376 84.600 376 92V104Q376 113 368 113H362Q352.600 113 352.600 103z" fill="#c7a6f7"/>
<path d="M354.500 96Q354.500 89.500 361 89.500H366Q373.500 89.500 373.500 96V103Q373.500 111 366 111H361Q354.500 111 354.500 103z" fill="#aa80e8"/>
<path d="M362.400 84.600V113M352.600 102.200H376" stroke="#7a55b8" stroke-width="0.900" fill="none"/>
<path d="M376 97l4.500-3v12l-4.500 4z" fill="#7e56c0"/>
<polygon points="375.30,80.20 377.21,85.58 382.37,83.13 379.92,88.29 385.30,90.20 379.92,92.11 382.37,97.27 377.21,94.82 375.30,100.20 373.39,94.82 368.23,97.27 370.68,92.11 365.30,90.20 370.68,88.29 368.23,83.13 373.39,85.58" fill="#fff" opacity="0.850"/>
<polygon points="375.30,81.80 376.60,87.06 381.24,84.26 378.44,88.90 383.70,90.20 378.44,91.50 381.24,96.14 376.60,93.34 375.30,98.60 374.00,93.34 369.36,96.14 372.16,91.50 366.90,90.20 372.16,88.90 369.36,84.26 374.00,87.06" fill="#f5a300"/><path d="M407.400 113.500V87.900L413.100 82.300H418" fill="#f4f4f4" stroke="#555" stroke-width="1.100"/><rect x="407.400" y="87.900" width="6" height="25.600" fill="#dcdcdc"/><path d="M413.400 113.500H407.400V87.900L413.100 82.300H418" fill="none" stroke="#555" stroke-width="1.100"/>
<rect x="414.300" y="87.900" width="8.700" height="25.700" fill="#6baee3"/><path d="M414.300 87.900L419.400 82.200H428.900L423 87.900z" fill="#8ccbf8"/><path d="M423 87.900L428.900 82.200V107.800L423 113.600z" fill="#4a96d2"/>
<rect x="426.300" y="95.900" width="4" height="3" fill="#fff"/><path d="M427 97.400H433" stroke="#222" stroke-width="1.300"/><path d="M436.300 97.400l-4.600-2.700v5.400z" fill="#222"/><path d="M449.200 89.600L456.400 82.300H466" fill="none" stroke="#555" stroke-width="1.100"/>
<path d="M473.300 104.200L480.800 97.400V106.900L473.300 113.500z" fill="#bdbdbd"/>
<path d="M449.200 89.600H461Q473.300 90.500 473.300 104.200V113.500H449.200z" fill="#dcdcdc"/>
<path d="M461.400 88.600L466.800 82.100Q480 84 480.800 95.600L474.500 101.900Q473 90.500 461.400 88.600z" fill="#6baee3"/>
<path d="M449.200 89.600V113.500H473.300L480.800 106.900V97.400" fill="none" stroke="#555" stroke-width="1.100" stroke-linejoin="round"/><path d="M492.200 89.600L499.300 82.300H523.600L516.400 89.600z" fill="#f4f4f4"/><path d="M516.400 89.600L523.600 82.300V106.900L516.400 113.500z" fill="url(#gR)"/><rect x="492.200" y="89.600" width="24.200" height="23.900" fill="#dcdcdc"/>
<path d="M492.200 89.600L499.300 82.300H523.600V106.900L516.400 113.500H492.200z" fill="none" stroke="#555" stroke-width="1.100" stroke-linejoin="round"/>
<path d="M492.200 89.600H516.400V113.500M516.400 89.600L523.600 82.300" fill="none" stroke="#c9c9c9" stroke-width="0.600"/>
<rect x="495.900" y="93.300" width="16" height="16.300" fill="#f6f6f6"/>
<path d="M496.100 94H503.800V102.200L496.100 109.500z" fill="#4a96d2"/><path d="M503.800 102.200H511.900V109.600H496.100z" fill="#8ccbf8"/><rect x="545.300" y="86.300" width="17.600" height="17.200" fill="#6baee3"/><path d="M545.300 86.300L549 82.100H567L562.900 86.300z" fill="#8ccbf8"/><path d="M562.900 86.300L567 82.100V99.700L562.900 103.500z" fill="#4a96d2"/>
<path d="M535.200 96L538.600 92H545.300V96z" fill="#8ccbf8"/><path d="M535.200 96H545.300V103.500H553V113.600H535.200z" fill="#6baee3"/><path d="M553 103.500H556.800V109.600L553 113.600z" fill="#4a96d2"/><rect x="580.300" y="88.400" width="21.500" height="9" fill="#6baee3"/><path d="M580.300 88.400L586.400 82.100H607.800L601.800 88.400z" fill="#8ccbf8"/><path d="M601.800 88.400L607.800 82.100V91.500L601.800 97.400z" fill="#4a96d2"/>
<path d="M601.800 103.300L607.800 98.800V106.900L601.800 112.300z" fill="#bdbdbd"/><rect x="580.300" y="103.300" width="21.500" height="9" fill="#dcdcdc"/>
<path d="M580.300 103.300V112.300H601.800L607.800 106.900V98.800" fill="none" stroke="#555" stroke-width="1.100" stroke-linejoin="round"/>
<path d="M578 100.400H602.200L609.900 92.300" fill="none" stroke="#fff" stroke-width="3.200"/><path d="M578 100.400H602.200L609.900 92.300" fill="none" stroke="#2b8be0" stroke-width="1.300"/><path d="M637 82.300l5 7.400h-4v7.200h7.300v-4l7 5-7 5v-4H638v7.200h4l-5 7.400-5-7.400h4v-7.200h-7.300v4l-7-5 7-5v4H636v-7.200h-4z" fill="#2e2e2e"/><rect x="678.300" y="101.900" width="12" height="11.600" fill="#dcdcdc"/><rect x="690.300" y="101.900" width="11.700" height="11.600" fill="#dcdcdc"/>
<path d="M690.300 101.900L693.600 98.300H705.600L702 101.900z" fill="#f4f4f4"/><path d="M702 101.900L705.600 98.300V109.600L702 113.500z" fill="#bdbdbd"/>
<path d="M678.300 101.900V113.500H702L705.600 109.600V98.300H696M690.300 101.900V113.500M690.300 101.900H702V113.500M702 101.900L705.600 98.300M690.300 101.900L693.600 98.300" fill="none" stroke="#555" stroke-width="1.100" stroke-linejoin="round"/>
<rect x="678.300" y="90.200" width="12" height="11.700" fill="#6baee3"/><path d="M678.300 90.200L681.700 86.300H693.600L690.300 90.200z" fill="#8ccbf8"/><path d="M690.300 90.200L693.600 86.300V97.400L690.300 101.900z" fill="#4a96d2"/>
<polygon points="701.40,80.60 703.16,85.95 708.19,83.41 705.65,88.44 711.00,90.20 705.65,91.96 708.19,96.99 703.16,94.45 701.40,99.80 699.64,94.45 694.61,96.99 697.15,91.96 691.80,90.20 697.15,88.44 694.61,83.41 699.64,85.95" fill="#fff" opacity="0.900"/>
<polygon points="701.40,82.00 702.62,87.24 707.20,84.40 704.36,88.98 709.60,90.20 704.36,91.42 707.20,96.00 702.62,93.16 701.40,98.40 700.18,93.16 695.60,96.00 698.44,91.42 693.20,90.20 698.44,88.98 695.60,84.40 700.18,87.24" fill="#f5a300"/><path d="M723.300 91.500L730 84.800Q732.500 83.600 735.400 85.300V94.800Q733 96.600 730 96V104.600L724.300 110.500H723.300z" fill="#c6c6c6" stroke="#555" stroke-width="1.100" stroke-linejoin="round"/>
<path d="M730.300 85.500Q732.500 84.300 734.800 85.600V94.400Q732.800 95.700 730.300 95.200z" fill="#e2e2e2"/><ellipse cx="732.600" cy="86" rx="1.800" ry="0.800" fill="#9a9a9a"/>
<path d="M732.500 97.400V101.900" stroke="#2b8be0" stroke-width="1.200"/>
<path d="M744 86.100L750.300 92V111.400L744 105.500z" fill="#dedede" stroke="#555" stroke-width="1.100" stroke-linejoin="round"/>
<path d="M738.100 95.200Q738.100 93.600 741 93.600Q744 93.600 744 95.200V103.800Q744 105.200 741 105.200Q738.100 105.200 738.100 103.800z" fill="#c2c2c2" stroke="#555" stroke-width="1.100"/>
<ellipse cx="741" cy="95.200" rx="2.600" ry="1.200" fill="#e6e6e6"/>
<path d="M741.500 90.200V95.600" stroke="#2b8be0" stroke-width="1.200"/><rect x="801.300" y="91.100" width="7.700" height="21.500" fill="#dcdcdc"/><path d="M809 112.600H801.300V91.100L810.300 82.300H817.100" fill="none" stroke="#555" stroke-width="1.100" stroke-linejoin="round"/>
<path d="M810 90.600L819.100 82.100V104.200L810 112.700z" fill="#5cc787"/><path d="M822 90.600L831.100 82.100V104.200L822 112.700z" fill="#e59a64"/><rect x="896.100" y="99.900" width="27.900" height="6.100" fill="#f9a500"/><path d="M897.10 100V101.7" stroke="#6a4a10" stroke-width="0.900"/><path d="M900.15 100V103.2" stroke="#6a4a10" stroke-width="0.900"/><path d="M903.20 100V101.7" stroke="#6a4a10" stroke-width="0.900"/><path d="M906.25 100V103.2" stroke="#6a4a10" stroke-width="0.900"/><path d="M909.30 100V101.7" stroke="#6a4a10" stroke-width="0.900"/><path d="M912.35 100V103.2" stroke="#6a4a10" stroke-width="0.900"/><path d="M915.40 100V101.7" stroke="#6a4a10" stroke-width="0.900"/><path d="M918.45 100V103.2" stroke="#6a4a10" stroke-width="0.900"/><path d="M921.50 100V101.7" stroke="#6a4a10" stroke-width="0.900"/>
<path d="M896.500 90V98.800M923.500 90V98.800M898 94.500H922" stroke="#5a5a5a" stroke-width="1.100" fill="none"/>
<path d="M897 94.500l4-2.600v5.200zM923 94.500l-4-2.600v5.200z" fill="#5a5a5a"/><rect x="979.500" y="83.500" width="28.200" height="28" fill="#8ccbf8" stroke="#3f8fd0" stroke-width="1"/>
<circle cx="999.900" cy="91.100" r="3.100" fill="#ffffd2"/>
<path d="M980 102.800Q984.500 95 987.400 95Q990.500 95 997.300 105Q1000.500 101.500 1002.300 101.500Q1004.500 101.500 1007.200 105.500V111H980z" fill="#3f8fc8"/><rect x="1072.300" y="82.600" width="27.300" height="21" fill="none" stroke="#22b050" stroke-width="1.200" stroke-dasharray="4 2.070"/>
<path d="M1093.200 96.500V110L1096.400 107.300L1099.100 113.500L1101.800 112.300L1099.100 106.700H1103.200z" fill="#fff" stroke="#333" stroke-width="1.100" stroke-linejoin="round"/></svg>
<div class="abs" style="left:0;top:810px;width:1440px;height:50px;background:#f2f2f2"></div>
<div class="abs" style="left:0;top:810px;width:1440px;height:1px;background:#e0e0e0"></div>
<svg style="left:0;top:820px" width="130" height="30" viewBox="0 820 130 30"><g fill="#2e2e2e">
<rect x="11" y="827.500" width="2" height="14"/><path d="M23.300 827.500v14l-9.800-7z"/>
<path d="M46 827.500v14l-10.500-7z"/><rect x="46.600" y="831.500" width="2" height="6"/>
<path d="M60.500 826.800v15.400l12-7.700z"/>
<path d="M87 827.500v14l10.500-7z"/><rect x="84.400" y="831.500" width="2" height="6"/>
<path d="M110.700 827.500v14l9.800-7z"/><rect x="121" y="827.500" width="2" height="14"/>
</g></svg>
<svg width="0" height="0" style="left:0;top:0"><defs>
<symbol id="tsk" viewBox="0 0 18 18" overflow="visible">
<path d="M4 2.500H13M2.500 4.300V12.800M14.500 4.300V7.700M4 14.500H8.200" fill="none" stroke="#505050" stroke-width="1"/>
<g fill="#0a7fe6"><rect x="1" y="1" width="2" height="2"/><rect x="14" y="1" width="2" height="2"/><rect x="1" y="14" width="2" height="2"/></g>
<path d="M8.200 14.500Q10 14.500 10.600 15.600" fill="none" stroke="#777" stroke-width="0.900"/>
<path d="M12.300 16.100L10.500 14.100L14.300 10.400L16.200 12.300z" fill="#fbbd4a"/><path d="M9 16.900L12.300 16.100L10.500 14.100z" fill="#5a5a5a"/>
<ellipse cx="15.700" cy="10.700" rx="1.700" ry="1.400" transform="rotate(40 15.700 10.700)" fill="#f3352f"/>
</symbol>
<symbol id="tex" viewBox="0 0 18 18" overflow="visible">
<path d="M1.100 13.200H10.400L13.100 10.600V13.500L10.400 16.100H1.100z" fill="#c2c2c2"/><path d="M1.100 13.200H10.400L13.100 10.600V11.600L10.400 14.200H1.100z" fill="#e4e4e4"/>
<path d="M1.100 2.500L3.800 0.900H13.100L10.400 2.500z" fill="#8ccbf8"/><rect x="1.100" y="2.500" width="9.300" height="10.700" fill="#6baee3"/><path d="M10.400 2.500L13.100 0.900V10.600L10.400 13.200z" fill="#4a96d2"/>
<path d="M15.400 2.500V13.200" stroke="#222" stroke-width="1.100"/><path d="M13.700 4.300l1.700-3.300 1.700 3.300z" fill="#222"/>
</symbol>
<symbol id="tsh" viewBox="0 0 18 18" overflow="visible">
<path d="M1.500 3.800L4.600 1H16.500L13.300 3.800z" fill="#fff"/><path d="M13.300 3.800L16.500 1V13.200L13.300 16z" fill="#c4c4c4"/><rect x="1.500" y="3.800" width="11.800" height="12.200" fill="#f6f6f6"/>
<path d="M3.200 6.500H6.900V10.500L3.200 14.200z" fill="#3f8fd0"/><path d="M6.900 10.500H11V14.200H3.200z" fill="#8ccbf8"/>
<path d="M1.500 3.800L4.600 1H16.500V13.200L13.300 16H1.500z" fill="none" stroke="#555" stroke-width="1" stroke-linejoin="round"/>
</symbol>
<symbol id="tho" viewBox="0 0 18 18" overflow="visible">
<path d="M1.500 3.800L4.600 1H16.500L13.300 3.800z" fill="#fafafa"/><path d="M13.300 3.800L16.500 1V13.200L13.300 16z" fill="#c8c8c8"/><rect x="1.500" y="3.800" width="11.800" height="12.200" fill="#dedede"/>
<path d="M1.500 3.800L4.600 1H16.500V13.200L13.300 16H1.500z" fill="none" stroke="#555" stroke-width="1" stroke-linejoin="round"/>
<circle cx="8.100" cy="9.500" r="4.600" fill="#fafafa" stroke="#555" stroke-width="0.900"/>
<clipPath id="thc"><circle cx="8.100" cy="9.500" r="3.600"/></clipPath><g clip-path="url(#thc)"><rect x="3" y="5" width="11" height="10" fill="#4fa0dc"/><circle cx="10.800" cy="6.800" r="4" fill="#fafafa"/></g>
</symbol>
<symbol id="tmv" viewBox="0 0 18 18" overflow="visible">
<g transform="translate(8.700,8.200) scale(0.860) translate(-9,-9)"><path d="M9 0.500l3.200 4.200h-2.300v3.400h3.400V5.800l4.200 3.200-4.200 3.200v-2.300h-3.400v3.400h2.300l-3.200 4.200-3.200-4.200h2.300v-3.400H4.700v2.300L0.500 9l4.200-3.200v2.300h3.400V4.700H5.800z" fill="#2e2e2e"/></g>
</symbol>
</defs></svg>
<div class="abs" style="left:166px;top:821.500px;width:24px;height:24.500px;background:#dce22e;border-radius:2px"></div>
<svg style="left:0;top:810px" width="1440" height="50" viewBox="0 810 1440 50"><path d="M155 845v5.900H850.300v-5.900" fill="none" stroke="#c6c6c6" stroke-width="2"/><path d="M178.1 845v5.900" stroke="#c6c6c6" stroke-width="2"/><path d="M202.1 845v5.900" stroke="#c6c6c6" stroke-width="2"/><path d="M226.1 845v5.900" stroke="#c6c6c6" stroke-width="2"/><path d="M250.1 845v5.900" stroke="#c6c6c6" stroke-width="2"/><path d="M274.1 845v5.900" stroke="#c6c6c6" stroke-width="2"/><path d="M298.1 845v5.900" stroke="#c6c6c6" stroke-width="2"/><path d="M322.1 845v5.900" stroke="#c6c6c6" stroke-width="2"/><path d="M346.1 845v5.900" stroke="#c6c6c6" stroke-width="2"/><path d="M370.1 845v5.900" stroke="#c6c6c6" stroke-width="2"/><path d="M394.1 845v5.900" stroke="#c6c6c6" stroke-width="2"/><path d="M418.1 845v5.900" stroke="#c6c6c6" stroke-width="2"/><path d="M442.1 845v5.900" stroke="#c6c6c6" stroke-width="2"/><path d="M466.1 845v5.900" stroke="#c6c6c6" stroke-width="2"/><path d="M490.1 845v5.900" stroke="#c6c6c6" stroke-width="2"/><path d="M514.1 845v5.900" stroke="#c6c6c6" stroke-width="2"/><path d="M538.1 845v5.900" stroke="#c6c6c6" stroke-width="2"/><path d="M562.1 845v5.900" stroke="#c6c6c6" stroke-width="2"/><path d="M586.1 845v5.900" stroke="#c6c6c6" stroke-width="2"/><path d="M610.1 845v5.900" stroke="#c6c6c6" stroke-width="2"/><path d="M634.1 845v5.900" stroke="#c6c6c6" stroke-width="2"/><path d="M658.1 845v5.900" stroke="#c6c6c6" stroke-width="2"/><path d="M682.1 845v5.900" stroke="#c6c6c6" stroke-width="2"/><path d="M706.1 845v5.900" stroke="#c6c6c6" stroke-width="2"/><path d="M730.1 845v5.900" stroke="#c6c6c6" stroke-width="2"/><path d="M754.1 845v5.900" stroke="#c6c6c6" stroke-width="2"/><path d="M778.1 845v5.900" stroke="#c6c6c6" stroke-width="2"/><path d="M802.1 845v5.900" stroke="#c6c6c6" stroke-width="2"/><path d="M826.1 845v5.900" stroke="#c6c6c6" stroke-width="2"/><use href="#tsk" x="145" y="825" width="18" height="18"/><use href="#tsk" x="169" y="825" width="18" height="18"/><use href="#tsk" x="193" y="825" width="18" height="18"/><use href="#tsk" x="217" y="825" width="18" height="18"/><use href="#tex" x="241" y="825.5" width="18" height="18"/><use href="#tsh" x="265" y="825.5" width="18" height="18"/><use href="#tex" x="289" y="825.5" width="18" height="18"/><use href="#tsk" x="313" y="825" width="18" height="18"/><use href="#tex" x="337" y="825.5" width="18" height="18"/><use href="#tsk" x="361" y="825" width="18" height="18"/><use href="#tex" x="385" y="825.5" width="18" height="18"/><use href="#tmv" x="409" y="825.5" width="18" height="18"/><use href="#tsk" x="433" y="825" width="18" height="18"/><use href="#tex" x="457" y="825.5" width="18" height="18"/><use href="#tsk" x="481" y="825" width="18" height="18"/><use href="#tex" x="505" y="825.5" width="18" height="18"/><use href="#tsk" x="529" y="825" width="18" height="18"/><use href="#tex" x="553" y="825.5" width="18" height="18"/><use href="#tsk" x="577" y="825" width="18" height="18"/><use href="#tex" x="601" y="825.5" width="18" height="18"/><use href="#tsk" x="625" y="825" width="18" height="18"/><use href="#tho" x="649" y="825.5" width="18" height="18"/><use href="#tsk" x="673" y="825" width="18" height="18"/><use href="#tex" x="697" y="825.5" width="18" height="18"/><use href="#tsk" x="721" y="825" width="18" height="18"/><use href="#tex" x="745" y="825.5" width="18" height="18"/><use href="#tsk" x="769" y="825" width="18" height="18"/><use href="#tex" x="793" y="825.5" width="18" height="18"/><use href="#tsk" x="817" y="825" width="18" height="18"/><use href="#tex" x="841" y="825.5" width="18" height="18"/><path d="M856 820.300h11.900v3.700l-5.100 4.600v23h-2v-23l-4.800-4.600z" fill="#5e5e5e"/></svg>
<svg style="left:1410.500px;top:827.500px" width="16" height="16" viewBox="0 0 16 16"><g transform="translate(8,8)" fill="#8a8a8a"><circle r="5.600"/><rect x="-1.700" y="-8" width="3.400" height="4" transform="rotate(0)"/><rect x="-1.700" y="-8" width="3.400" height="4" transform="rotate(45)"/><rect x="-1.700" y="-8" width="3.400" height="4" transform="rotate(90)"/><rect x="-1.700" y="-8" width="3.400" height="4" transform="rotate(135)"/><rect x="-1.700" y="-8" width="3.400" height="4" transform="rotate(180)"/><rect x="-1.700" y="-8" width="3.400" height="4" transform="rotate(225)"/><rect x="-1.700" y="-8" width="3.400" height="4" transform="rotate(270)"/><rect x="-1.700" y="-8" width="3.400" height="4" transform="rotate(315)"/><circle r="2.500" fill="#f2f2f2"/></g></svg>
<div class="abs" style="left:601.500px;top:781.500px;width:237px;height:24.500px;background:#f0f0f0"></div>
<svg style="left:600px;top:780px" width="240" height="28" viewBox="600 780 240 28">
<!-- orbit -->
<ellipse cx="612" cy="794.300" rx="6.800" ry="2.900" fill="none" stroke="#2a2a2a" stroke-width="1.300"/>
<path d="M612 785.300l3.300 4.200h-2v11.300h-2.600v-11.300h-2z" fill="#fff" stroke="#2a2a2a" stroke-width="0.900" stroke-linejoin="round"/>
<path d="M606.200 794.300a6.800 2.900 0 0 0 12.600 1.200" fill="none" stroke="#2a2a2a" stroke-width="1.300"/>
<path d="M604.600 797.300l4.600-1.200-1.600 3.900z" fill="#2a2a2a"/>
<path d="M624.7 792h6l-3 3.800z" fill="#2e2e2e"/>
<!-- look at -->
<path d="M639 791l5.500-4.300 1.700 2 5-2.300v4.600" fill="#b9b9b9" stroke="#3a3a3a" stroke-width="1" stroke-linejoin="round"/>
<rect x="637.700" y="791.300" width="15" height="10" fill="#f4f4f4" stroke="#2e2e2e" stroke-width="1.300"/>
<rect x="640.500" y="794.200" width="9.500" height="4.300" fill="#aeb4c0" stroke="#3a3a3a" stroke-width="0.900"/>
<!-- pan hand -->
<path d="M669 801.300c-2.200-2.200-4.400-5-5.200-6.600-0.500-1.200 1-2 2-0.900l1.700 1.900-0.900-6.300c-0.200-1.400 1.600-1.700 1.900-0.300l0.900 4.300-0.200-6c0-1.400 1.900-1.400 2 0l0.400 5.800 0.700-5.200c0.200-1.300 2-1.100 1.900 0.300l-0.500 5.600 1.200-3.700c0.400-1.200 2-0.700 1.700 0.600l-1.300 5.600c-0.400 2-1 3.300-2 4.900z" fill="#fff" stroke="#2a2a2a" stroke-width="1" stroke-linejoin="round"/>
<!-- zoom -->
<defs><radialGradient id="lens" cx="0.35" cy="0.3" r="0.8"><stop offset="0" stop-color="#fff"/><stop offset="1" stop-color="#c3d6e6"/></radialGradient></defs>
<path d="M697.200 796l4 4" stroke="#2a2a2a" stroke-width="2.600" stroke-linecap="round"/>
<circle cx="694.100" cy="792.800" r="4.400" fill="url(#lens)" stroke="#2a2a2a" stroke-width="1.300"/>
<path d="M700.800 788.500h4.600M703.100 786.200v4.600M700.800 792.800h4.600" stroke="#2a2a2a" stroke-width="1"/>
<!-- zoom window -->
<rect x="715.500" y="786.200" width="15" height="15.200" fill="none" stroke="#444" stroke-width="1" stroke-dasharray="2.200 1.600"/>
<path d="M725.600 796.500l4.200 4.300" stroke="#2a2a2a" stroke-width="2.800" stroke-linecap="round"/>
<circle cx="721.500" cy="792.200" r="5.800" fill="url(#lens)" stroke="#2a2a2a" stroke-width="1.300"/>
<path d="M736 792h6l-3 3.800z" fill="#2e2e2e"/>
<!-- display -->
<rect x="748.900" y="787.300" width="14.200" height="10.600" rx="1" fill="#f0f0f0" stroke="#3a3a3a" stroke-width="1.400"/><rect x="751" y="789.300" width="10" height="6.600" fill="#9dbde6" stroke="#5a7fb8" stroke-width="0.800"/><path d="M753.800 798.500h4.400l1.300 2.300h-7z" fill="#4a4a4a"/><rect x="752" y="800.500" width="8" height="1.200" rx="0.600" fill="#c0c0c0"/>
<path d="M766 792h6l-3 3.800z" fill="#2e2e2e"/>
<!-- grid -->
<defs><linearGradient id="gdg" x1="0" y1="0" x2="0" y2="1"><stop offset="0" stop-color="#55555c"/><stop offset="1" stop-color="#8a8a94"/></linearGradient></defs>
<rect x="779.500" y="786.400" width="15.300" height="15.100" fill="url(#gdg)"/><path d="M782.600 786.400v15.100M785.650 786.400v15.100M788.700 786.400v15.100M791.750 786.400v15.100M779.500 789.400h15.300M779.500 792.400h15.300M779.500 795.450h15.300M779.500 798.500h15.300" stroke="#d6d6d6" stroke-width="0.800"/>
<rect x="779.500" y="786.400" width="15.300" height="15.100" fill="none" stroke="#3e3e44" stroke-width="0.800"/>
<path d="M797 792h6l-3 3.800z" fill="#2e2e2e"/>
<!-- viewports -->
<g fill="#9fb7e0" stroke="#2c4a86" stroke-width="1.300"><rect x="810.500" y="787.900" width="6.200" height="5" rx="0.800"/><rect x="818.100" y="787.900" width="6.200" height="5" rx="0.800"/><rect x="810.500" y="794.500" width="6.200" height="5" rx="0.800"/><rect x="818.100" y="794.500" width="6.200" height="5" rx="0.800"/></g>
<path d="M827.7 792h6l-3 3.800z" fill="#2e2e2e"/>
</svg>
</body></html>
